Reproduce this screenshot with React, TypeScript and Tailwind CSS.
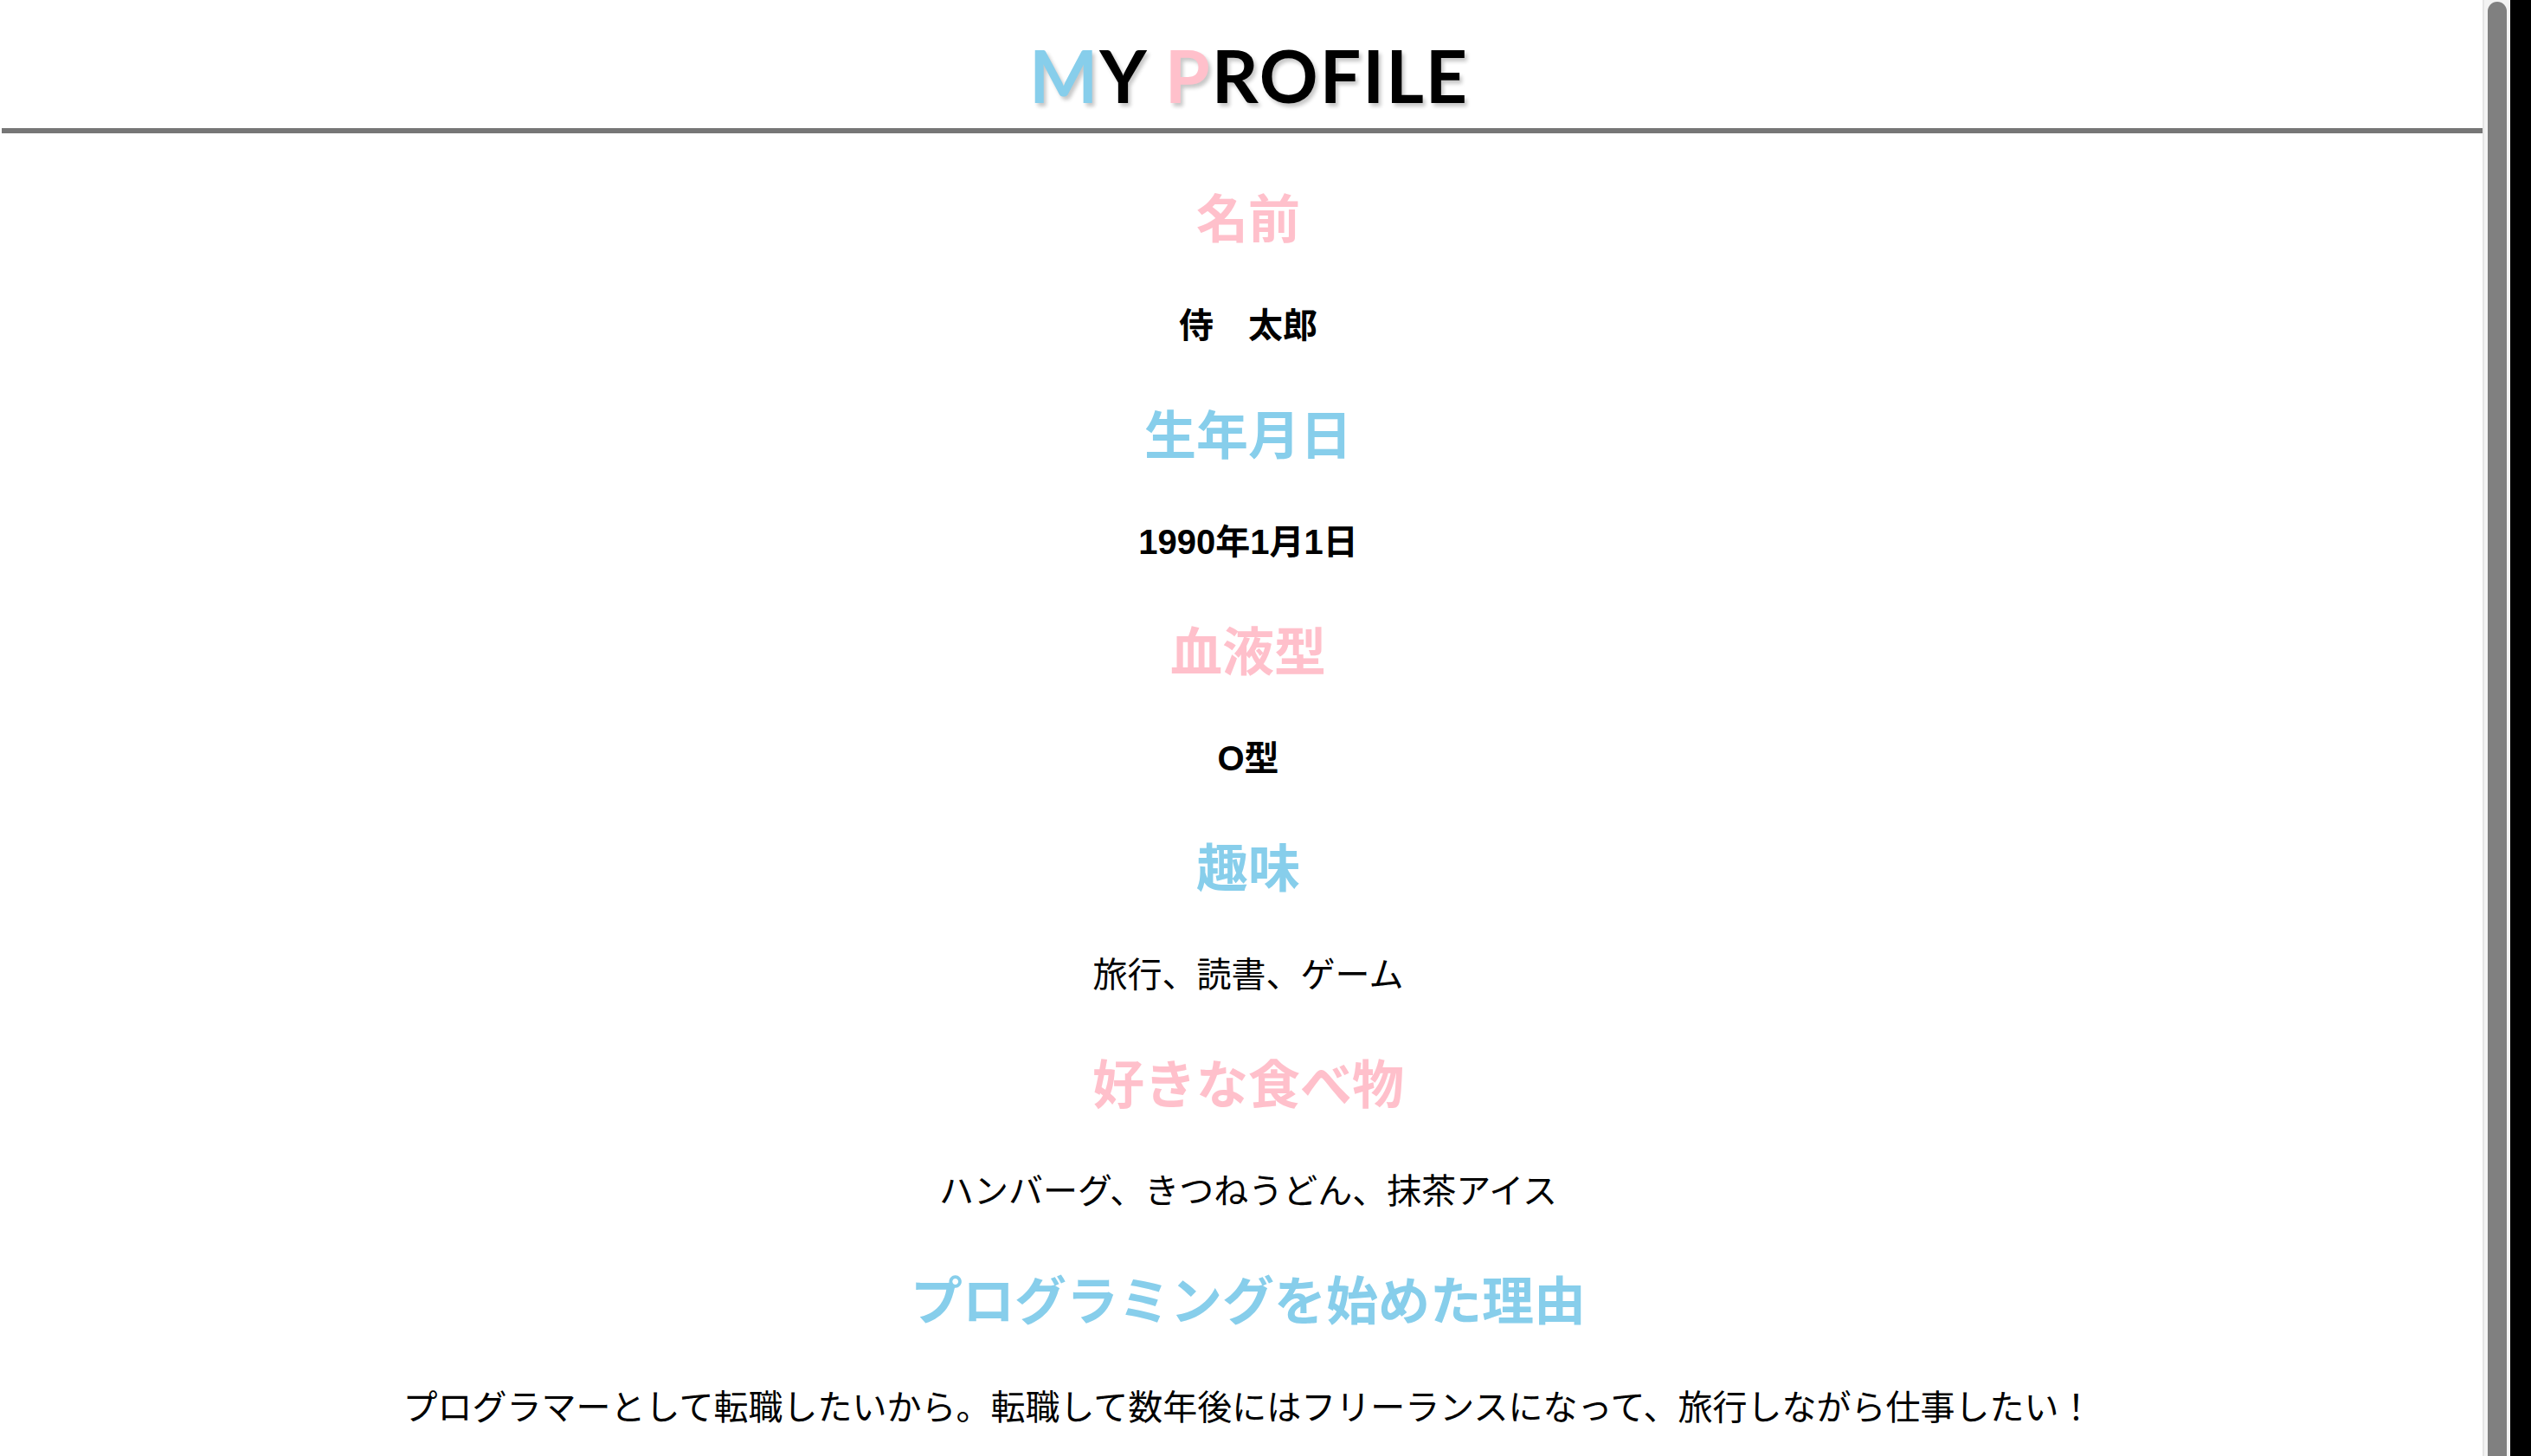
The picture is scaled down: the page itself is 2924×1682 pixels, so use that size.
import React from "react";

type Item = { label: string; value: string; tone: "pink" | "blue"; bold?: boolean };

const items: Item[] = [
  { label: "名前", value: "侍　太郎", tone: "pink", bold: true },
  { label: "生年月日", value: "1990年1月1日", tone: "blue", bold: true },
  { label: "血液型", value: "O型", tone: "pink", bold: true },
  { label: "趣味", value: "旅行、読書、ゲーム", tone: "blue" },
  { label: "好きな食べ物", value: "ハンバーグ、きつねうどん、抹茶アイス", tone: "pink" },
  {
    label: "プログラミングを始めた理由",
    value: "プログラマーとして転職したいから。転職して数年後にはフリーランスになって、旅行しながら仕事したい！",
    tone: "blue",
  },
];

export default function App() {
  return (
    <div className="flex h-screen w-full overflow-hidden bg-white">
      {/* page */}
      <div className="relative flex-1 overflow-hidden">
        <main className="flex flex-col pr-[16px]">
          <header className="ml-[2px] flex h-[154px] justify-center border-b-[6px] border-[#767676] pt-[45px]">
            <h1 className="font-['Lato','Noto_Sans',sans-serif] text-[84px] font-bold leading-none tracking-[2px] text-black [text-shadow:3px_4px_4px_rgba(0,0,0,0.22)]">
              <span className="text-[#87CEEB]">M</span>Y <span className="text-[#FFC0CB]">P</span>ROFILE
            </h1>
          </header>

          <section className="flex flex-col items-center gap-[69px] pt-[65px] text-center font-['Liberation_Sans','Noto_Sans_CJK_JP',sans-serif]">
            {items.map((item) => (
              <div key={item.label} className="flex flex-col items-center">
                <h2
                  className={
                    "mb-[61px] text-[60px] font-bold leading-[72px] " +
                    (item.tone === "pink" ? "text-[#FFC0CB]" : "text-[#87CEEB]")
                  }
                >
                  {item.label}
                </h2>
                <p className={"text-[40px] leading-[48px] text-black " + (item.bold ? "font-bold" : "font-normal")}>
                  {item.value}
                </p>
              </div>
            ))}
          </section>
        </main>

        {/* scrollbar overlay */}
        <div className="absolute right-0 top-0 flex h-full w-[32px] justify-center border-l-2 border-[#e4e4e4] bg-[#f3f3f3]">
          <div className="mt-[2px] h-[3000px] w-[22px] rounded-t-full bg-[#808080]" />
        </div>
      </div>
      <div className="w-[24px] shrink-0 bg-black" />
    </div>
  );
}
